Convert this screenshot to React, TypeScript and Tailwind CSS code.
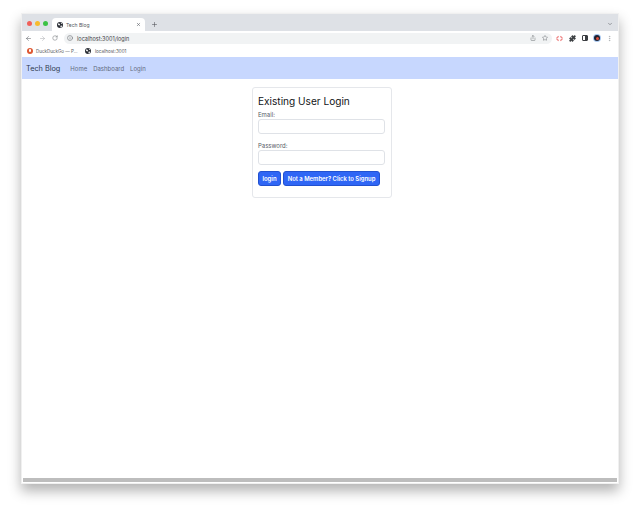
import React from "react";
import { ArrowLeft, ArrowRight, RotateCw, Info, Share, Star, Puzzle, ChevronDown, X, Plus, EllipsisVertical } from "lucide-react";

function Globe({ size = 7 }: { size?: number }) {
  return (
    <svg width={size} height={size} viewBox="0 0 16 16" className="shrink-0">
      <circle cx="8" cy="8" r="8" fill="#2b2f36" />
      <path d="M3 3 L8 5 L7 9 L3 8 Z M10 9 L14 10 L11 15 L9 13 Z M10 1 L14 4 L11 5 Z" fill="#fff" />
    </svg>
  );
}

export default function App() {
  return (
    <div className="w-[640px] h-[512px] bg-white overflow-hidden pt-[14px] pl-[22px] font-['Inter','Liberation_Sans',sans-serif]">
      <div className="w-[596px] h-[469px] flex flex-col bg-white shadow-[0_7px_12px_1px_rgba(0,0,0,0.3)] outline outline-1 outline-[#f0f0f0]">
        {/* Tab strip */}
        <div className="h-[17px] shrink-0 bg-[#dee1e6] flex items-end">
          <div className="flex items-center gap-[3.5px] pl-[5px] pb-[5.5px] w-[30px]">
            <span className="w-[4.5px] h-[4.5px] shrink-0 rounded-full bg-[#f0605a]" />
            <span className="w-[4.5px] h-[4.5px] shrink-0 rounded-full bg-[#f7bb2d]" />
            <span className="w-[4.5px] h-[4.5px] shrink-0 rounded-full bg-[#3cc244]" />
          </div>
          <div className="w-[93px] h-[13px] bg-white rounded-t-[4px] flex items-center pl-[5px] pr-[4px] gap-[3px]">
            <Globe size={6} />
            <span className="pt-[2px] text-[5px] leading-none text-[#50545a] flex-1">Tech Blog</span>
            <X size={5} strokeWidth={2.5} className="text-[#50545a]" />
          </div>
          <div className="flex-1 h-full flex items-center pl-[6px] pt-[3px]">
            <Plus size={7} strokeWidth={2} className="text-[#54575c]" />
          </div>
          <div className="h-full flex items-center pr-[5px] pt-[3px]">
            <ChevronDown size={6} strokeWidth={2.5} className="text-[#6b6e73]" />
          </div>
        </div>
        {/* Toolbar */}
        <div className="h-[13px] shrink-0 bg-white flex items-center pl-[3px] pt-[1px]">
          <ArrowLeft size={7} strokeWidth={2} className="text-[#6d7075]" />
          <ArrowRight size={7} strokeWidth={2} className="text-[#b5b7ba] ml-[7px]" />
          <RotateCw size={6} strokeWidth={2} className="text-[#6d7075] ml-[6px]" />
          <div className="ml-[6px] w-[488px] h-[11px] shrink-0 rounded-full bg-[#f1f3f4] flex items-center pl-[3px] pr-[4px] gap-[3px]">
            <Info size={6} strokeWidth={2} className="text-[#5f6368]" />
            <span className="ml-[1px] pt-[3px] text-[5.5px] leading-none text-[#3f4246] flex-1">localhost:3001/login</span>
            <Share size={6} strokeWidth={2} className="text-[#6d7075]" />
            <Star size={6} strokeWidth={2} className="text-[#6d7075] ml-[3px]" />
          </div>
          <svg width="7" height="7" viewBox="0 0 16 16" className="ml-[4px] shrink-0">
            <path d="M1 8 L6 3 M1 8 L6 13 M15 8 L10 3 M15 8 L10 13" stroke="#ef8a8a" strokeWidth="3" fill="none" />
          </svg>
          <Puzzle size={7} className="ml-[6px] text-[#3b3e42] fill-[#3b3e42]" />
          <div className="ml-[6px] w-[6px] h-[6px] border border-[#3b3e42] rounded-[1px] flex justify-end">
            <div className="w-[2px] bg-[#3b3e42]" />
          </div>
          <div className="ml-[5px] w-[8px] h-[8px] rounded-full bg-[#a8c8f0] flex items-center justify-center">
            <div className="w-[6px] h-[6px] rounded-full bg-[#1c2030] flex items-center justify-center">
              <div className="w-[3px] h-[3px] rounded-full bg-[#e0503c]" />
            </div>
          </div>
          <EllipsisVertical size={7} className="ml-[5px] text-[#a0a3a8]" />
        </div>
        {/* Bookmarks */}
        <div className="h-[13px] shrink-0 bg-white flex items-center pl-[5px]">
          <span className="w-[6px] h-[6px] rounded-full bg-[#de5833] flex items-center justify-center">
            <span className="w-[2px] h-[3px] rounded-full bg-white" />
          </span>
          <span className="ml-[3px] pt-[3px] text-[4.5px] leading-none text-[#55585d] w-[49px]">DuckDuckGo — P...</span>
          <Globe size={6} />
          <span className="ml-[4px] pt-[3px] text-[4.6px] leading-none text-[#55585d]">localhost:3001</span>
        </div>
        {/* Navbar */}
        <nav className="h-[22px] shrink-0 bg-[#c7d7fe] flex items-center pl-[4px]">
          <span className="pt-[2px] text-[7.3px] leading-none text-[#2f3a4f]">Tech Blog</span>
          <div className="ml-[10px] pt-[2px] flex gap-[6px] text-[6px] leading-none text-[#626b7f]">
            <span>Home</span>
            <span>Dashboard</span>
            <span>Login</span>
          </div>
        </nav>
        {/* Page */}
        <main className="flex-1 flex justify-center items-start bg-white">
          <div className="mt-[8px] ml-[4px] w-[140px] h-[111px] bg-white border border-[#e5e7eb] rounded-[3px] px-[5px] pt-[6px]">
            <h1 className="text-[10.1px] leading-[14px] text-[#111418]">Existing User Login</h1>
            <label className="block mt-[3px] text-[6px] leading-[8px] text-[#555b66]">Email:</label>
            <div className="w-[127px] h-[15px] bg-white border border-[#dfe2e7] rounded-[3px]" />
            <label className="block mt-[7px] pt-[1px] text-[6px] leading-[8px] text-[#555b66]">Password:</label>
            <div className="w-[127px] h-[15px] bg-white border border-[#dfe2e7] rounded-[3px]" />
            <div className="mt-[6px] flex gap-[2px]">
              <button className="h-[15px] w-[23px] bg-[#2f66f5] border border-[#2251d0] rounded-[3px] text-white text-[6px] font-semibold leading-none">login</button>
              <button className="h-[15px] w-[97px] bg-[#2f66f5] border border-[#2251d0] rounded-[3px] text-white text-[5.9px] font-semibold leading-none whitespace-nowrap">Not a Member? Click to Signup</button>
            </div>
          </div>
        </main>
        {/* Bottom edge */}
        <div className="h-[5px] shrink-0 px-[1px] border-b border-white bg-white">
          <div className="h-full bg-[#bdbdbd]" />
        </div>
      </div>
    </div>
  );
}
